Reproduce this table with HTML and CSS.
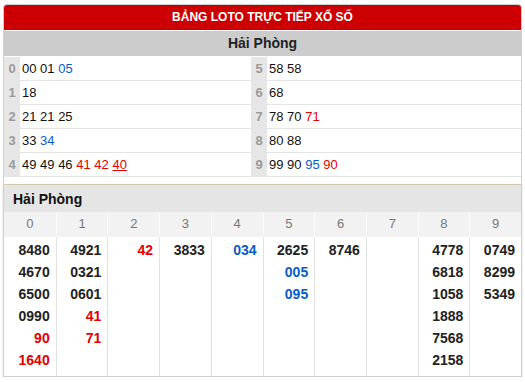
FILE: index.html
```html
<!DOCTYPE html>
<html lang="vi">
<head>
<meta charset="utf-8">
<link rel="stylesheet" href="styles.css">
</head>
<body>
<div class="wrap">
  <div class="loto">
    <div class="hdr">BẢNG LOTO TRỰC TIẾP XỔ SỐ</div>
    <div class="prov">Hải Phòng</div>
    <div class="grid">
      <div class="h">0</div><div class="v">00 01 <span class="b">05</span></div>
      <div class="h">5</div><div class="v">58 58</div>
      <div class="h">1</div><div class="v">18</div>
      <div class="h">6</div><div class="v">68</div>
      <div class="h">2</div><div class="v">21 21 25</div>
      <div class="h">7</div><div class="v">78 70 <span class="r">71</span></div>
      <div class="h">3</div><div class="v">33 <span class="b">34</span></div>
      <div class="h">8</div><div class="v">80 88</div>
      <div class="h">4</div><div class="v">49 49 46 <span class="r">41</span> <span class="r">42</span> <span class="r u">40</span></div>
      <div class="h">9</div><div class="v">99 90 <span class="b">95</span> <span class="r">90</span></div>
    </div>
  </div>
  <div class="res">
    <div class="rtitle">Hải Phòng</div>
    <div class="cols">
      <div class="ch">0</div><div class="ch">1</div><div class="ch">2</div><div class="ch">3</div><div class="ch">4</div>
      <div class="ch">5</div><div class="ch">6</div><div class="ch">7</div><div class="ch">8</div><div class="ch">9</div>
      <div class="cv"><span>8480</span><span>4670</span><span>6500</span><span>0990</span><span class="r">90</span><span class="r">1640</span></div>
      <div class="cv"><span>4921</span><span>0321</span><span>0601</span><span class="r">41</span><span class="r">71</span></div>
      <div class="cv"><span class="r">42</span></div>
      <div class="cv"><span>3833</span></div>
      <div class="cv"><span class="b">034</span></div>
      <div class="cv"><span>2625</span><span class="b">005</span><span class="b">095</span></div>
      <div class="cv"><span>8746</span></div>
      <div class="cv"></div>
      <div class="cv"><span>4778</span><span>6818</span><span>1058</span><span>1888</span><span>7568</span><span>2158</span></div>
      <div class="cv"><span>0749</span><span>8299</span><span>5349</span></div>
    </div>
  </div>
</div>
</body>
</html>
```

FILE: styles.css
```css
* { box-sizing: border-box; }
body {
  margin: 0;
  background: #fff;
  font-family: "Liberation Sans", Arial, sans-serif;
  color: #222;
}
.wrap {
  margin: 4px 3px 0 3px;
  width: 519px;
}
.loto {
  border: 1px solid #cfcfcf;
  border-bottom: none;
  border-radius: 4px 4px 0 0;
  padding-bottom: 7px;
}
.hdr {
  background: #cc0000;
  color: #fff;
  font-weight: bold;
  font-size: 12px;
  text-align: center;
  height: 25px;
  line-height: 25px;
  border-radius: 3px 3px 0 0;
}
.prov {
  margin-top: 1px;
  background: #cccccc;
  font-weight: bold;
  font-size: 14px;
  color: #222;
  text-align: center;
  height: 25px;
  line-height: 25px;
}
.grid {
  margin-top: 1px;
  display: grid;
  grid-template-columns: 16px 231px 16px 1fr;
  grid-auto-rows: 24px;
}
.h {
  background: #e6e6e6;
  color: #9a9a9a;
  font-weight: bold;
  font-size: 13px;
  text-align: center;
  line-height: 24px;
  border-bottom: 1px solid #e6e6e6;
}
.v {
  font-size: 13px;
  line-height: 23px;
  padding-left: 2px;
  border-bottom: 1px solid #e3e3e3;
  color: #111;
}
.r { color: #e30000; }
.b { color: #0a5cc4; }
.u { text-decoration: underline; }
.res {
  border: 1px solid #cfcfcf;
  border-top: 1px solid #d6c9ac;
  box-shadow: 0 1px 2px rgba(0,0,0,0.15);
}
.rtitle {
  background: #e5e5e5;
  font-weight: bold;
  font-size: 14px;
  color: #111;
  height: 27px;
  line-height: 28px;
  padding-left: 9px;
}
.cols {
  display: grid;
  grid-template-columns: repeat(10, 1fr);
}
.ch {
  background: #f2f2f2;
  color: #777;
  font-size: 13px;
  text-align: center;
  height: 25px;
  line-height: 24px;
  border-left: 1px solid #fbfbfb;
}
.ch:first-child { border-left: none; }
.cv {
  display: flex;
  flex-direction: column;
  align-items: flex-end;
  padding: 2px 6px 5px 0;
  border-left: 1px solid #e2e2e2;
  font-weight: bold;
  font-size: 14px;
  line-height: 22px;
  color: #222;
}
.cols .cv:nth-child(11) { border-left: none; }
```
